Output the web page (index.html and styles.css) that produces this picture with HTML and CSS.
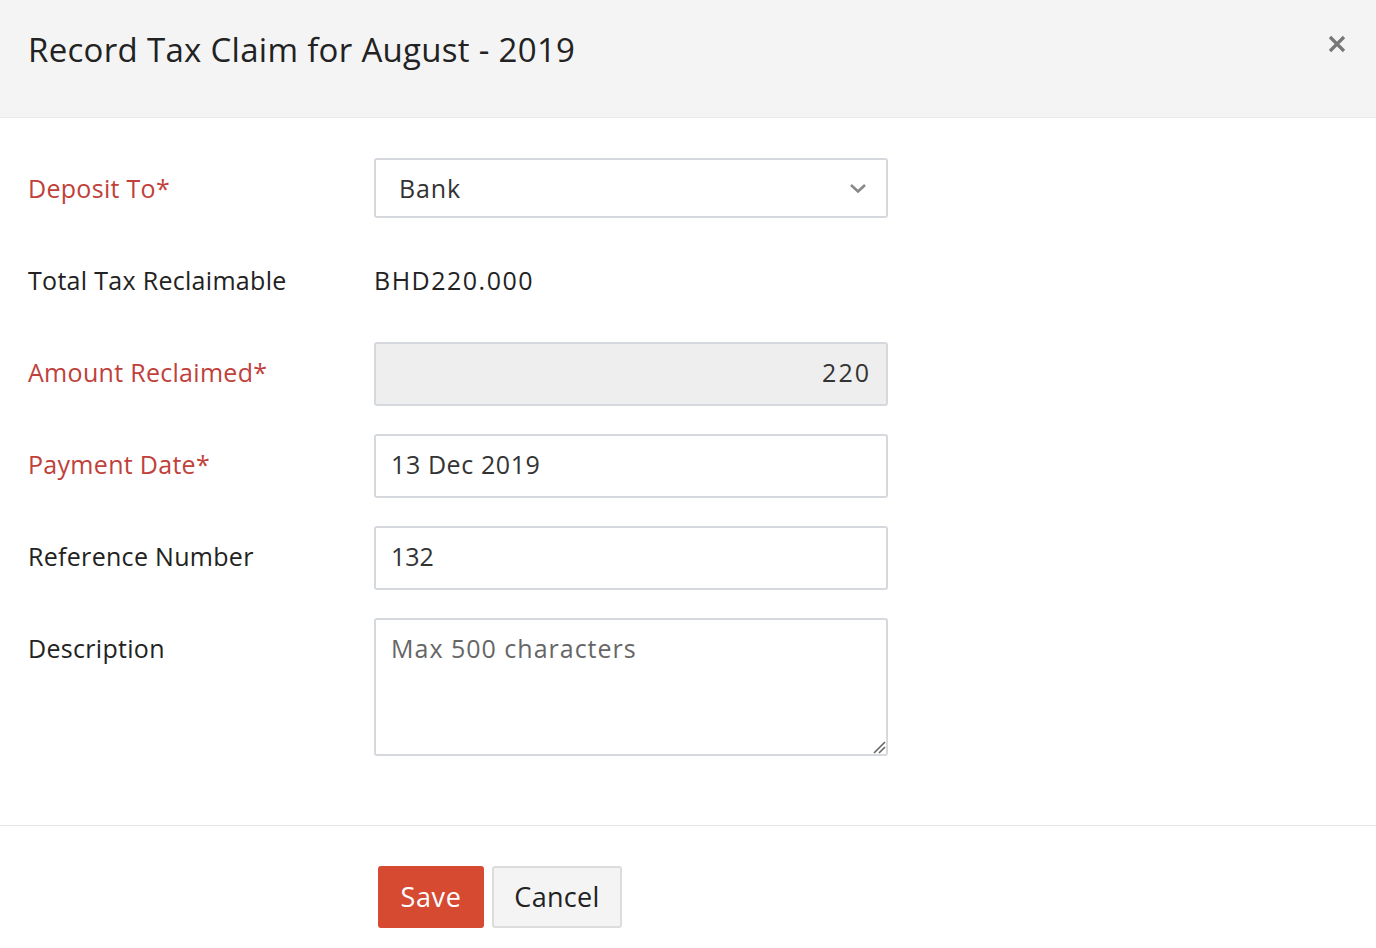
FILE: index.html
```html
<!DOCTYPE html>
<html>
<head>
<meta charset="utf-8">
<link rel="stylesheet" href="styles.css">
</head>
<body>
<div class="modal">
  <div class="modal-header">
    <h1 class="title">Record Tax Claim for August - 2019</h1>
    <button class="close" aria-label="Close">
      <svg width="18" height="18" viewBox="0 0 18 18"><path d="M2 2 L16 16 M16 2 L2 16" stroke="#777" stroke-width="3.2" stroke-linecap="butt"/></svg>
    </button>
  </div>
  <div class="modal-body">
    <div class="row">
      <label class="label required">Deposit To*</label>
      <div class="field select">
        <span class="sel-text">Bank</span>
        <svg class="chev" width="18" height="12" viewBox="0 0 18 12"><path d="M2 3 L9 9.5 L16 3" fill="none" stroke="#888" stroke-width="2.6"/></svg>
      </div>
    </div>
    <div class="row static">
      <label class="label">Total Tax Reclaimable</label>
      <div class="value">BHD220.000</div>
    </div>
    <div class="row">
      <label class="label required shift">Amount Reclaimed*</label>
      <div class="field input disabled right"><span class="wide-num">220</span></div>
    </div>
    <div class="row">
      <label class="label required shift">Payment Date*</label>
      <div class="field input"><span class="date">13 Dec 2019</span></div>
    </div>
    <div class="row">
      <label class="label shift">Reference Number</label>
      <div class="field input">132</div>
    </div>
    <div class="row top">
      <label class="label">Description</label>
      <div class="field textarea">
        <span class="placeholder">Max 500 characters</span>
        <svg class="grip" width="16" height="16" viewBox="0 0 16 16"><path d="M15 4 L4 15 M15 9 L9 15" stroke="#666" stroke-width="1.6"/></svg>
      </div>
    </div>
  </div>
  <div class="modal-footer">
    <button class="btn btn-primary">Save</button>
    <button class="btn btn-default">Cancel</button>
  </div>
</div>
</body>
</html>
```

FILE: styles.css
```css
* { box-sizing: border-box; }
html, body { margin: 0; padding: 0; background: #fff; }
body { font-family: "Open Sans", Lato, sans-serif; color: #222; }
.modal { width: 1376px; }
.modal-header {
  height: 118px;
  background: #f4f4f4;
  border-bottom: 1px solid #e8e8e8;
  display: flex;
  align-items: center;
  justify-content: space-between;
  padding: 0 28px 0 28px;
}
.title { margin: 0; font-weight: 400; font-size: 33px; color: #222; padding-bottom: 18px; letter-spacing: 0.3px; }
.close { background: none; border: none; padding: 0; margin: 0 2px 30px 0; display: flex; }
.modal-body { padding: 40px 28px 69px 28px; display: flex; flex-direction: column; gap: 28px; border-bottom: 1px solid #e6e6e6; }
.row { display: grid; grid-template-columns: 346px 514px; align-items: center; }
.row.top { align-items: start; }
.row.static { height: 68px; }
.label { font-size: 25px; color: #222; letter-spacing: 0.3px; }
.label.shift { padding-bottom: 4px; }
.label.required { color: #c0413b; }
.row.top .label { padding-top: 13px; }
.value { font-size: 25px; color: #222; letter-spacing: 1.5px; }
.field {
  border: 2px solid #d5d9dd;
  border-radius: 3px;
  font-size: 25px;
  color: #333;
  display: flex;
  align-items: center;
}
.select { height: 60px; padding: 0 19px 0 23px; justify-content: space-between; }
.sel-text { letter-spacing: 0.9px; }
.input { height: 64px; padding: 0 15px 4px 15px; }
.input.right { justify-content: flex-end; padding-right: 17px; }
.wide-num { letter-spacing: 2px; margin-right: -2px; }
.date { letter-spacing: 0.6px; }
.disabled { background: #eee; }
.textarea { height: 138px; padding: 11px 15px; align-items: flex-start; position: relative; }
.placeholder { color: #666; letter-spacing: 1px; }
.grip { position: absolute; right: 0; bottom: 0; }
.modal-footer { padding: 40px 0 20px 378px; display: flex; gap: 8px; }
.btn { height: 62px; font-family: inherit; font-size: 27px; border-radius: 3px; padding: 0 0 2px 0; }
.btn-primary { background: #d64a32; color: #fff; border: 2px solid #d64a32; width: 106px; letter-spacing: 0.6px; }
.btn-default { background: #f4f4f4; color: #222; border: 2px solid #dcdcdc; width: 130px; letter-spacing: 0.3px; }
```
